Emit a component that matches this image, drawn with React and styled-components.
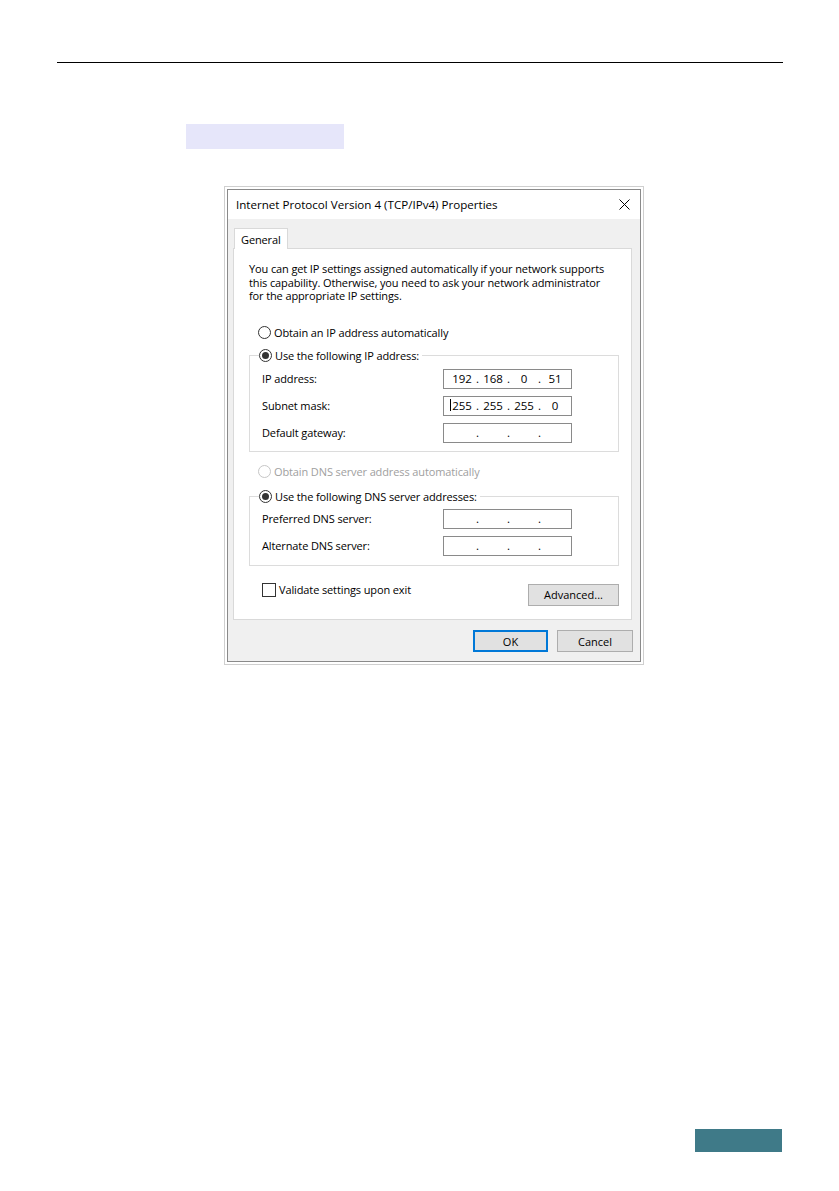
import React from "react";
import styled, { createGlobalStyle } from "styled-components";

const GlobalStyle = createGlobalStyle`
  html, body {
    margin: 0;
    padding: 0;
    background: #fff;
  }
  body {
    font-family: "Open Sans", "Noto Sans", sans-serif;
    color: #111;
  }
`;

const Page = styled.div`
  width: 839px;
  height: 1191px;
  display: flex;
  flex-direction: column;
  box-sizing: border-box;
`;

const HeaderRule = styled.div`
  margin: 62px 0 0 57px;
  width: 726px;
  border-top: 1.5px solid #000;
`;

const Highlight = styled.div`
  margin: 61px 0 0 186px;
  width: 158px;
  height: 25px;
  background: #e6e6fa;
`;

const Frame = styled.div`
  margin: 37px 0 0 224px;
  width: 420px;
  height: 479px;
  box-sizing: border-box;
  border: 1px solid #cfcfcf;
  padding: 2px;
  background: #fff;
  display: flex;
`;

const Window = styled.div`
  flex: 1;
  border: 1px solid #8a8a8a;
  display: flex;
  flex-direction: column;
  font-size: 11px;
  letter-spacing: -0.12px;
`;

const TitleBar = styled.div`
  height: 29px;
  display: flex;
  align-items: center;
  justify-content: space-between;
  padding: 0 10px 0 8px;
  background: #fff;
  font-size: 11.6px;
  letter-spacing: 0;
  color: #000;
`;

const Body = styled.div`
  flex: 1;
  background: #f0f0f0;
  padding: 9px 8px 0 5px;
  display: flex;
  flex-direction: column;
`;

const Tab = styled.div`
  position: relative;
  z-index: 1;
  align-self: flex-start;
  margin: 0 0 -1px 1px;
  width: 54px;
  height: 21px;
  box-sizing: border-box;
  border: 1px solid #d9d9d9;
  border-bottom: none;
  background: #fff;
  padding: 3px 0 0 6px;
  color: #000;
`;

const Panel = styled.div`
  height: 372px;
  box-sizing: border-box;
  border: 1px solid #d9d9d9;
  background: #fff;
  padding: 13px 12px 0 15px;
  display: flex;
  flex-direction: column;
`;

const Intro = styled.p`
  margin: 0;
  line-height: 13.5px;
  color: #000;
`;

const OptionRow = styled.label`
  display: flex;
  align-items: center;
  gap: 3px;
  height: 14px;
  margin-top: ${(p) => p.$top || 0}px;
  padding-left: 9px;
  color: ${(p) => (p.$disabled ? "#a0a0a0" : "#000")};
`;

const Radio = styled.span`
  width: 13px;
  height: 13px;
  box-sizing: border-box;
  border-radius: 50%;
  border: 1px solid ${(p) => (p.$disabled ? "#c6c6c6" : "#333")};
  background: #fff;
  display: flex;
  align-items: center;
  justify-content: center;
  &::after {
    content: "";
    width: 7px;
    height: 7px;
    border-radius: 50%;
    background: ${(p) => (p.$checked ? "#333" : "transparent")};
  }
`;

const Group = styled.fieldset`
  margin: ${(p) => p.$top}px 0 0 0;
  padding: ${(p) => p.$padTop}px 46px ${(p) => p.$padBottom}px 12px;
  border: 1px solid #dcdcdc;
  min-width: 0;
  display: flex;
  flex-direction: column;
  gap: 7px;
`;

const Legend = styled.legend`
  padding: 0 3px 0 0;
  margin-left: -3px;
  display: flex;
  align-items: center;
  gap: 3px;
  height: 14px;
  color: #000;
`;

const FieldRow = styled.div`
  display: flex;
  align-items: center;
  justify-content: space-between;
  height: 20px;
  color: #000;
`;

const IpBox = styled.div`
  width: 129px;
  height: 20px;
  box-sizing: border-box;
  border: 1px solid #8a8a8a;
  background: #fff;
  display: flex;
  align-items: center;
  padding-left: 4px;
  font-size: 11.5px;
  letter-spacing: 0;
  color: #000;
`;

const Octet = styled.span`
  width: 28px;
  text-align: center;
  position: relative;
`;

const Dot = styled.span`
  width: 3px;
  text-align: center;
`;

const Caret = styled.span`
  position: absolute;
  left: 2px;
  top: 1px;
  width: 1px;
  height: 12px;
  background: #000;
`;

const BottomRow = styled.div`
  margin-top: 17px;
  display: flex;
  justify-content: space-between;
  align-items: flex-start;
  padding: 0 0 0 13px;
`;

const CheckLabel = styled.label`
  display: flex;
  align-items: center;
  gap: 3px;
  height: 14px;
  color: #000;
`;

const Checkbox = styled.span`
  width: 14px;
  height: 14px;
  box-sizing: border-box;
  border: 1px solid #333;
  background: #fff;
`;

const Button = styled.button`
  width: ${(p) => p.$w}px;
  height: 22px;
  box-sizing: border-box;
  background: #e1e1e1;
  border: ${(p) => (p.$default ? "2px solid #0078d7" : "1px solid #adadad")};
  font: inherit;
  font-size: 11px;
  color: #000;
  padding: 0;
  margin: 0;
`;

const ButtonRow = styled.div`
  display: flex;
  justify-content: flex-end;
  gap: 9px;
  margin: 10px -1px 0 0;
`;

const CloseIcon = () => (
  <svg width="11" height="11" viewBox="0 0 11 11">
    <path d="M0.5 0.5 L10.5 10.5 M10.5 0.5 L0.5 10.5" stroke="#000" strokeWidth="1" />
  </svg>
);

const TealTab = styled.div`
  margin: auto 0 39px 695px;
  width: 87px;
  height: 23px;
  background: #3f7a88;
`;

function IpField({ values = ["", "", "", ""], caret }) {
  return (
    <IpBox>
      {values.map((v, i) => (
        <React.Fragment key={i}>
          <Octet>
            {caret && i === 0 && <Caret />}
            {v}
          </Octet>
          {i < 3 && <Dot>.</Dot>}
        </React.Fragment>
      ))}
    </IpBox>
  );
}

export default function App() {
  return (
    <Page>
      <GlobalStyle />
      <HeaderRule />
      <Highlight />
      <Frame>
        <Window>
          <TitleBar>
            <span>Internet Protocol Version 4 (TCP/IPv4) Properties</span>
            <CloseIcon />
          </TitleBar>
          <Body>
            <Tab>General</Tab>
            <Panel>
              <Intro>
                You can get IP settings assigned automatically if your network supports
                <br />
                this capability. Otherwise, you need to ask your network administrator
                <br />
                for the appropriate IP settings.
              </Intro>

              <OptionRow $top={23}>
                <Radio />
                Obtain an IP address automatically
              </OptionRow>

              <Group $top={9} $padTop={6} $padBottom={8}>
                <Legend>
                  <Radio $checked />
                  Use the following IP address:
                </Legend>
                <FieldRow>
                  IP address:
                  <IpField values={["192", "168", "0", "51"]} />
                </FieldRow>
                <FieldRow>
                  Subnet mask:
                  <IpField values={["255", "255", "255", "0"]} caret />
                </FieldRow>
                <FieldRow>
                  Default gateway:
                  <IpField />
                </FieldRow>
              </Group>

              <OptionRow $top={13} $disabled>
                <Radio $disabled />
                Obtain DNS server address automatically
              </OptionRow>

              <Group $top={11} $padTop={5} $padBottom={9}>
                <Legend>
                  <Radio $checked />
                  Use the following DNS server addresses:
                </Legend>
                <FieldRow>
                  Preferred DNS server:
                  <IpField />
                </FieldRow>
                <FieldRow>
                  Alternate DNS server:
                  <IpField />
                </FieldRow>
              </Group>

              <BottomRow>
                <CheckLabel>
                  <Checkbox />
                  Validate settings upon exit
                </CheckLabel>
                <Button $w={91} style={{ marginTop: 1 }}>
                  Advanced...
                </Button>
              </BottomRow>
            </Panel>
            <ButtonRow>
              <Button $w={75} $default>
                OK
              </Button>
              <Button $w={76}>Cancel</Button>
            </ButtonRow>
          </Body>
        </Window>
      </Frame>
      <TealTab />
    </Page>
  );
}
